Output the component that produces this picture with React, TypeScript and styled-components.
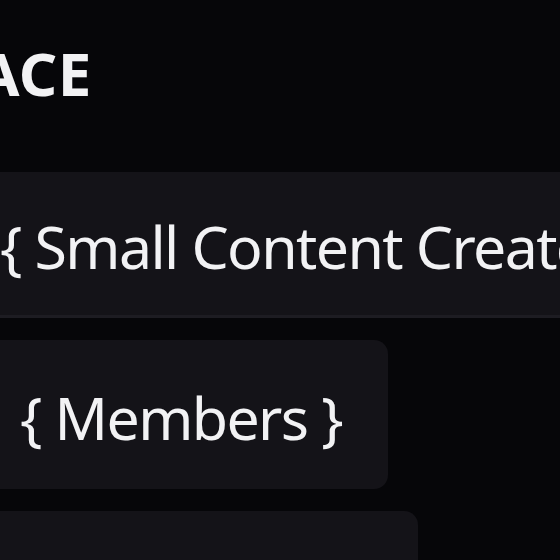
import styled, { createGlobalStyle } from "styled-components";

const GlobalStyle = createGlobalStyle`
  html, body {
    margin: 0;
    padding: 0;
    background: #060609;
  }
  body {
    font-family: "Noto Sans", "Open Sans", sans-serif;
    color: #f2f2f4;
  }
`;

const Screen = styled.div`
  width: 560px;
  height: 560px;
  overflow: hidden;
  display: flex;
  flex-direction: column;
`;

const Heading = styled.h1`
  flex-shrink: 0;
  margin: 0 0 0 -22px;
  padding-top: 31px;
  height: 172px;
  box-sizing: border-box;
  font-size: 60px;
  font-weight: 700;
  line-height: 84px;
  letter-spacing: 0.5px;
  white-space: nowrap;
`;

const List = styled.div`
  display: flex;
  flex-direction: column;
  gap: 22px;
`;

const Card = styled.div<{ $width: number; $inset: number; $height: number; $edge?: boolean }>`
  box-sizing: border-box;
  margin-left: -40px;
  width: ${(p) => p.$width}px;
  height: ${(p) => p.$height}px;
  padding-left: ${(p) => p.$inset}px;
  display: flex;
  align-items: center;
  background: #141318;
  border-radius: 14px;
  border-bottom: ${(p) => (p.$edge ? "3px solid #1d1c22" : "none")};
  flex-shrink: 0;
  white-space: nowrap;
`;

const Label = styled.span`
  font-size: 59px;
  font-weight: 400;
  line-height: 1;
  letter-spacing: -1.6px;
  padding-top: 6px;
`;

export default function App() {
  return (
    <>
      <GlobalStyle />
      <Screen>
        <Heading>ACE</Heading>
        <List>
          <Card $width={760} $inset={40} $height={146} $edge>
            <Label>{"{ Small Content Creator }"}</Label>
          </Card>
          <Card $width={428} $inset={60} $height={149}>
            <Label>{"{ Members }"}</Label>
          </Card>
          <Card $width={458} $inset={58} $height={149} />
        </List>
      </Screen>
    </>
  );
}
